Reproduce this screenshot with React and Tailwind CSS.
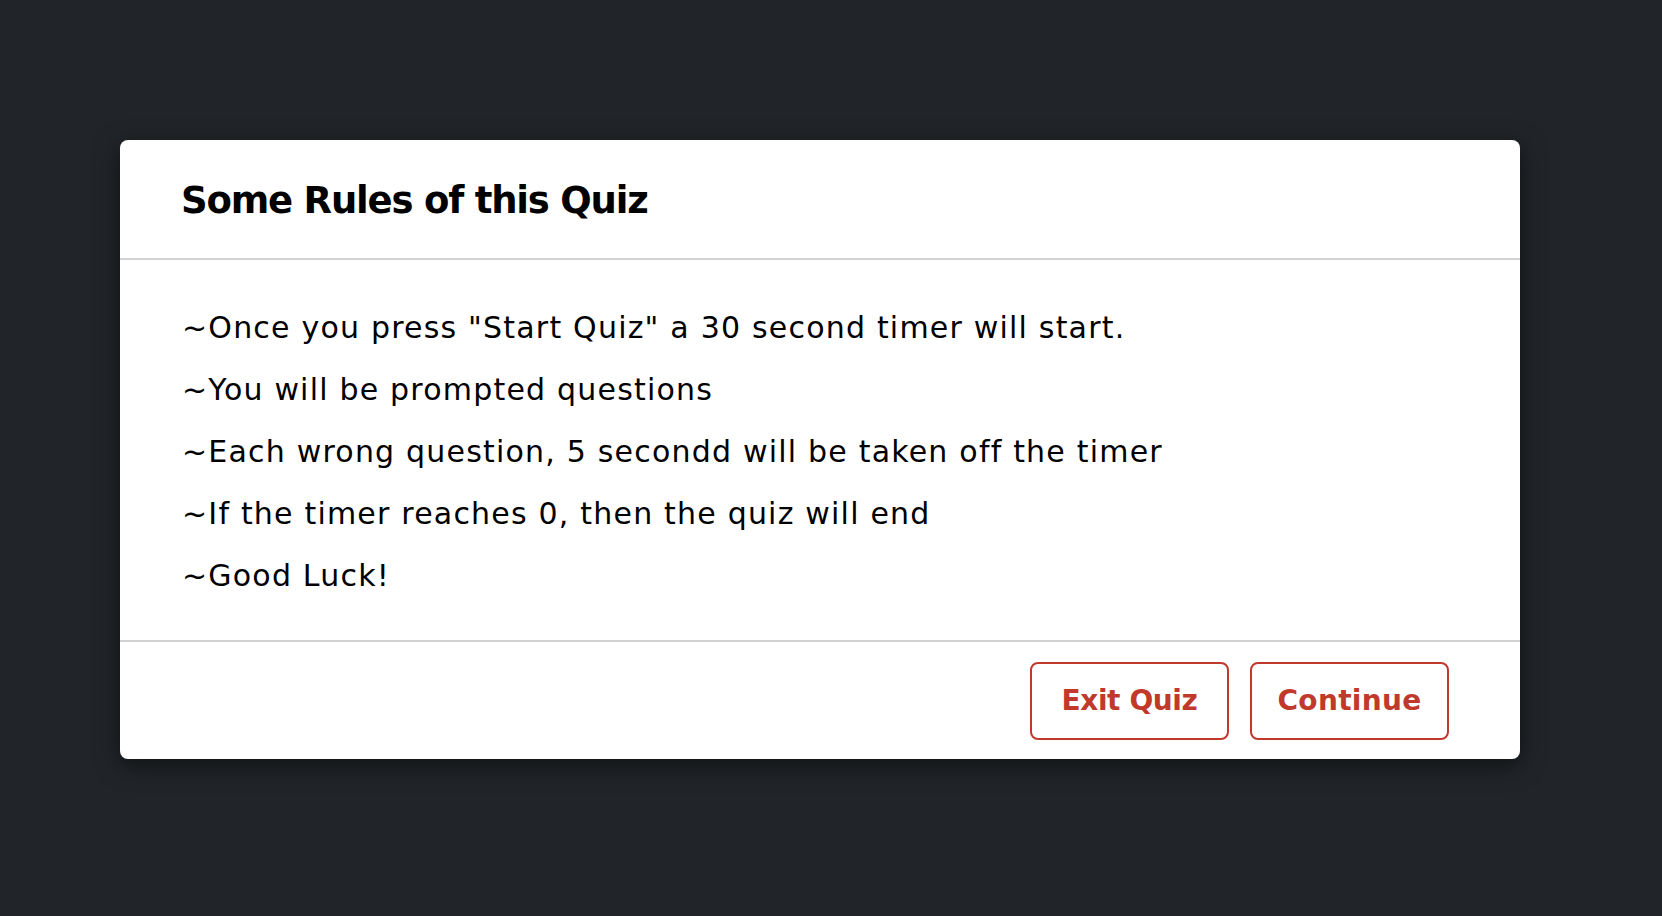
import React from 'react';

const rules = [
  '~Once you press "Start Quiz" a 30 second timer will start.',
  '~You will be prompted questions',
  '~Each wrong question, 5 secondd will be taken off the timer',
  '~If the timer reaches 0, then the quiz will end',
  '~Good Luck!',
];

export default function App() {
  return (
    <div className="min-h-screen bg-[#212529] pt-[140px] pl-[120px] font-['DejaVu_Sans',sans-serif]">
      <div className="w-[1400px] bg-white rounded-lg shadow-[0_6px_24px_rgba(0,0,0,0.55)]">
        {/* Header */}
        <div className="h-[120px] flex items-center px-[61px] pt-[3px] border-b-2 border-[#d3d3d3]">
          <h2 className="text-[37px] font-bold tracking-[-1.2px] text-black">
            Some Rules of this Quiz
          </h2>
        </div>

        {/* Rules */}
        <div className="px-[62px] pt-[37px] pb-[33px]">
          {rules.map((r) => (
            <p key={r} className="text-[30px] leading-[62px] tracking-[1.2px] text-black">
              {r}
            </p>
          ))}
        </div>

        {/* Footer */}
        <div className="h-[119px] flex items-center justify-end gap-[21px] pr-[71px] border-t-2 border-[#d3d3d3]">
          <button className="w-[199px] h-[78px] rounded-lg border-2 border-[#c0392b] text-[#c0392b] text-[28px] font-bold tracking-[-0.4px]">
            Exit Quiz
          </button>
          <button className="w-[199px] h-[78px] rounded-lg border-2 border-[#c0392b] text-[#c0392b] text-[28px] font-bold tracking-[0.3px]">
            Continue
          </button>
        </div>
      </div>
    </div>
  );
}
